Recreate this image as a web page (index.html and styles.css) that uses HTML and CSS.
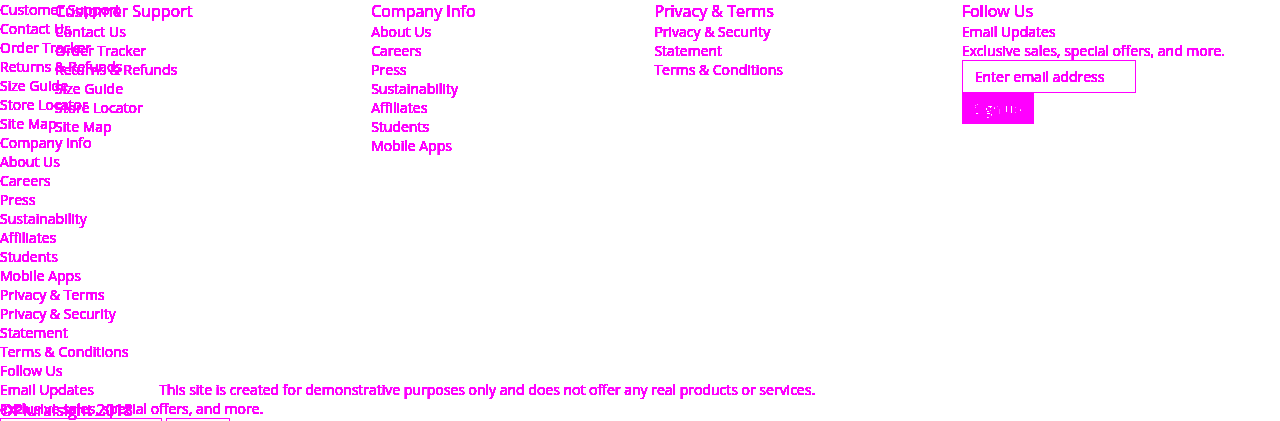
FILE: index.html
```html
<!DOCTYPE html>
<html lang="en">
<head>
<meta charset="utf-8">
<meta name="viewport" content="width=device-width, initial-scale=1">
<title>Site footer</title>
<link rel="stylesheet" href="styles.css">
</head>
<body>
<div class="page">
  <section class="stack">
    <ul class="list">
      <li>Customer Support</li>
      <li><a href="#">Contact Us</a></li>
      <li><a href="#">Order Tracker</a></li>
      <li><a href="#">Returns &amp; Refunds</a></li>
      <li><a href="#">Size Guide</a></li>
      <li><a href="#">Store Locator</a></li>
      <li><a href="#">Site Map</a></li>
      <li>Company Info</li>
      <li><a href="#">About Us</a></li>
      <li><a href="#">Careers</a></li>
      <li><a href="#">Press</a></li>
      <li><a href="#">Sustainability</a></li>
      <li><a href="#">Affiliates</a></li>
      <li><a href="#">Students</a></li>
      <li><a href="#">Mobile Apps</a></li>
      <li>Privacy &amp; Terms</li>
      <li><a href="#">Privacy &amp; Security<br>Statement</a></li>
      <li><a href="#">Terms &amp; Conditions</a></li>
      <li>Follow Us</li>
      <li>Email Updates</li>
      <li>Exclusive sales, special offers, and more.</li>
    </ul>
    <form class="inline-form">
      <input class="plain-field" type="email" aria-label="Email address">
      <button class="plain-button" type="button" aria-label="Submit email"></button>
    </form>
  </section>

  <footer class="footer">
    <div class="columns">
      <section>
        <h2 class="heading">Customer Support</h2>
        <ul class="list">
          <li><a href="#">Contact Us</a></li>
          <li><a href="#">Order Tracker</a></li>
          <li><a href="#">Returns &amp; Refunds</a></li>
          <li><a href="#">Size Guide</a></li>
          <li><a href="#">Store Locator</a></li>
          <li><a href="#">Site Map</a></li>
        </ul>
      </section>
      <section>
        <h2 class="heading">Company Info</h2>
        <ul class="list">
          <li><a href="#">About Us</a></li>
          <li><a href="#">Careers</a></li>
          <li><a href="#">Press</a></li>
          <li><a href="#">Sustainability</a></li>
          <li><a href="#">Affiliates</a></li>
          <li><a href="#">Students</a></li>
          <li><a href="#">Mobile Apps</a></li>
        </ul>
      </section>
      <section>
        <h2 class="heading">Privacy &amp; Terms</h2>
        <ul class="list">
          <li><a href="#">Privacy &amp; Security<br>Statement</a></li>
          <li><a href="#">Terms &amp; Conditions</a></li>
        </ul>
      </section>
      <section>
        <h2 class="heading">Follow Us</h2>
        <form class="signup">
          <label for="email">Email Updates</label>
          <p class="note">Exclusive sales, special offers, and more.</p>
          <input class="field" id="email" type="email" placeholder="Enter email address">
          <button class="button" type="button">Sign up</button>
        </form>
      </section>
    </div>
    <div>
      <p class="disclaimer">This site is created for demonstrative purposes only and does not offer any real products or services.</p>
      <p class="copyright">©Pluralsight 2018</p>
    </div>
  </footer>
</div>
</body>
</html>
```
FILE: styles.css
```css
* { box-sizing: border-box; }

body {
  margin: 0;
  background: #fff;
  color: #f0f;
  font: 14px/19px "Open Sans", sans-serif;
}

/* Both layers share one grid cell; the filter gives hard-edged text. */
.page {
  display: grid;
  grid-template: 100vh / 1fr;
  overflow: hidden;
  background: #fff;
  filter: brightness(0.52) contrast(30);
}

.stack,
.footer {
  grid-area: 1 / 1;
}

.footer {
  display: flex;
  flex-direction: column;
  justify-content: space-between;
}

.columns {
  display: flex;
  justify-content: space-between;
  padding: 0 55px;
}

.heading {
  margin: 0;
  font-size: 16px;
  line-height: 22px;
  font-weight: 400;
}

.list {
  margin: 0;
  padding: 0;
  list-style: none;
}

a {
  color: inherit;
  text-decoration: none;
}

.signup {
  display: flex;
  flex-direction: column;
  align-items: flex-start;
}

.note,
.disclaimer,
.copyright {
  margin: 0;
}

.field,
.button,
.plain-field,
.plain-button {
  font: inherit;
  color: inherit;
  background: #fff;
  border: 1px solid #f0f;
  border-radius: 0;
}

.field {
  width: 174px;
  padding: 6px 12px;
}

.field::placeholder {
  color: #f0f;
  opacity: 1;
}

.button {
  padding: 5px 11px;
  background: #f0f;
  color: #fff;
}

.inline-form {
  display: flex;
  gap: 4px;
}

.plain-field {
  width: 162px;
  height: 22px;
}

.plain-button {
  width: 64px;
  height: 22px;
}

.disclaimer {
  padding-left: 159px;
}

.copyright {
  font-size: 16px;
  line-height: 22px;
}
```
